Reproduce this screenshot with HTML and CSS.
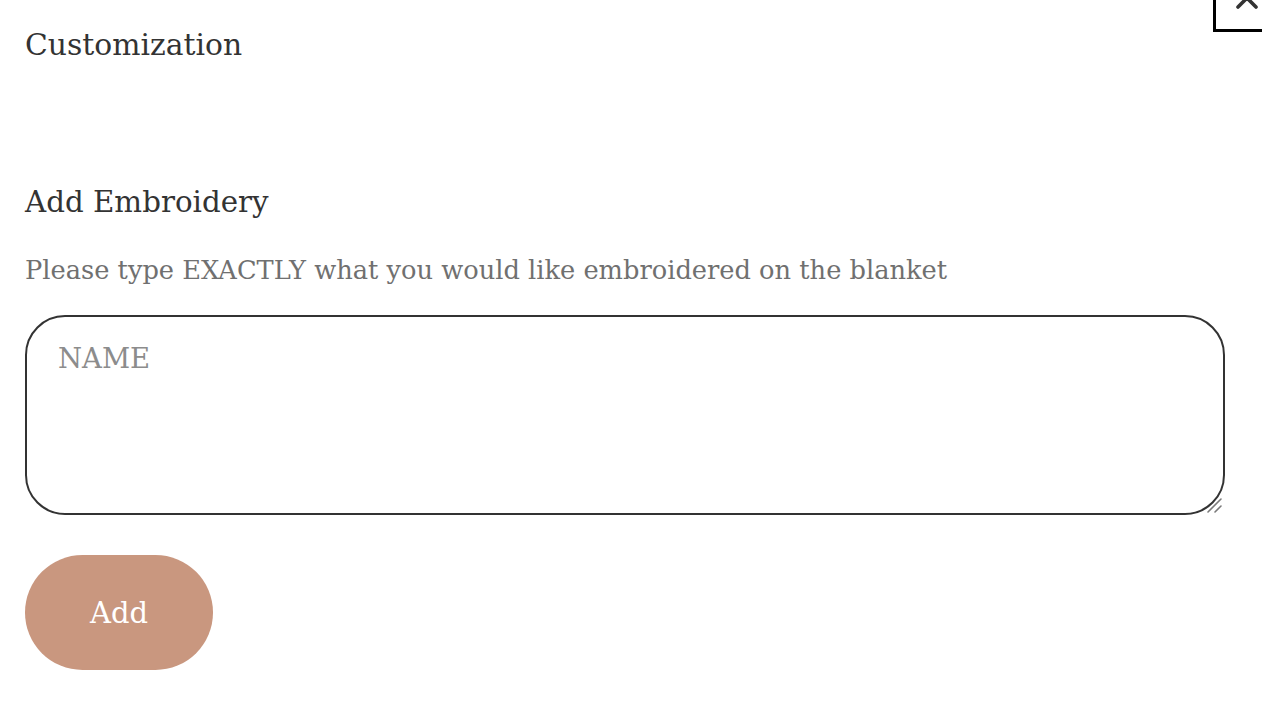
FILE: index.html
```html
<!DOCTYPE html>
<html lang="en">
<head>
<meta charset="utf-8">
<title>Customization</title>
<link rel="stylesheet" href="styles.css">
</head>
<body>
<div class="modal">
  <button class="close" aria-label="Close">
    <svg width="24" height="24" viewBox="0 0 24 24"><path d="M3 3 L21 21 M21 3 L3 21" stroke="#333" stroke-width="3.6" stroke-linecap="round"/></svg>
  </button>
  <h2 class="title">Customization</h2>
  <section class="field">
    <h3 class="label">Add Embroidery</h3>
    <p class="hint">Please type EXACTLY what you would like embroidered on the blanket</p>
    <div class="input-wrap">
      <textarea class="input" placeholder="NAME"></textarea>
      <svg class="grip" width="18" height="18" viewBox="0 0 18 18"><path d="M2 16 L15 3 M9 16 L15 10" stroke="#7a7a7a" stroke-width="1.6" stroke-linecap="round"/></svg>
    </div>
  </section>
  <button class="add">Add</button>
</div>
</body>
</html>
```

FILE: styles.css
```css
html, body {
  margin: 0;
  padding: 0;
  background: #fff;
}
body {
  font-family: "DejaVu Serif", "Liberation Serif", serif;
  color: #333;
  overflow: hidden;
}
.modal {
  position: relative;
  width: 1262px;
  height: 716px;
  padding: 0 37px 0 25px;
  box-sizing: border-box;
}
.close {
  position: absolute;
  top: -22px;
  right: -20px;
  width: 69px;
  height: 54px;
  border: 3px solid #000;
  background: #fff;
  padding: 0;
  display: flex;
  align-items: center;
  justify-content: center;
}
.close svg {
  display: block;
  margin-left: -1px;
  margin-top: -14px;
}
.title {
  margin: 0;
  padding-top: 26px;
  font-size: 29.8px;
  font-weight: 400;
  line-height: 38px;
}
.field {
  margin-top: 119px;
}
.label {
  margin: 0;
  font-size: 29.3px;
  font-weight: 400;
  line-height: 38px;
}
.hint {
  margin: 32px 0 0;
  font-size: 25.7px;
  line-height: 34px;
  color: #707070;
}
.input-wrap {
  position: relative;
  margin-top: 28px;
}
.input {
  display: block;
  width: 100%;
  height: 200px;
  box-sizing: border-box;
  border: 2px solid #333;
  border-radius: 40px;
  padding: 25px 31px;
  font-family: inherit;
  font-size: 27.5px;
  color: #333;
  resize: none;
  outline: none;
}
.input::placeholder {
  color: #8c8c8c;
}
.grip {
  position: absolute;
  right: 1px;
  bottom: 1px;
  pointer-events: none;
}
.add {
  display: block;
  margin-top: 40px;
  width: 188px;
  height: 115px;
  border: none;
  border-radius: 58px;
  background: #c9977f;
  color: #fff;
  font-family: inherit;
  font-size: 29px;
  padding: 0;
}
```
